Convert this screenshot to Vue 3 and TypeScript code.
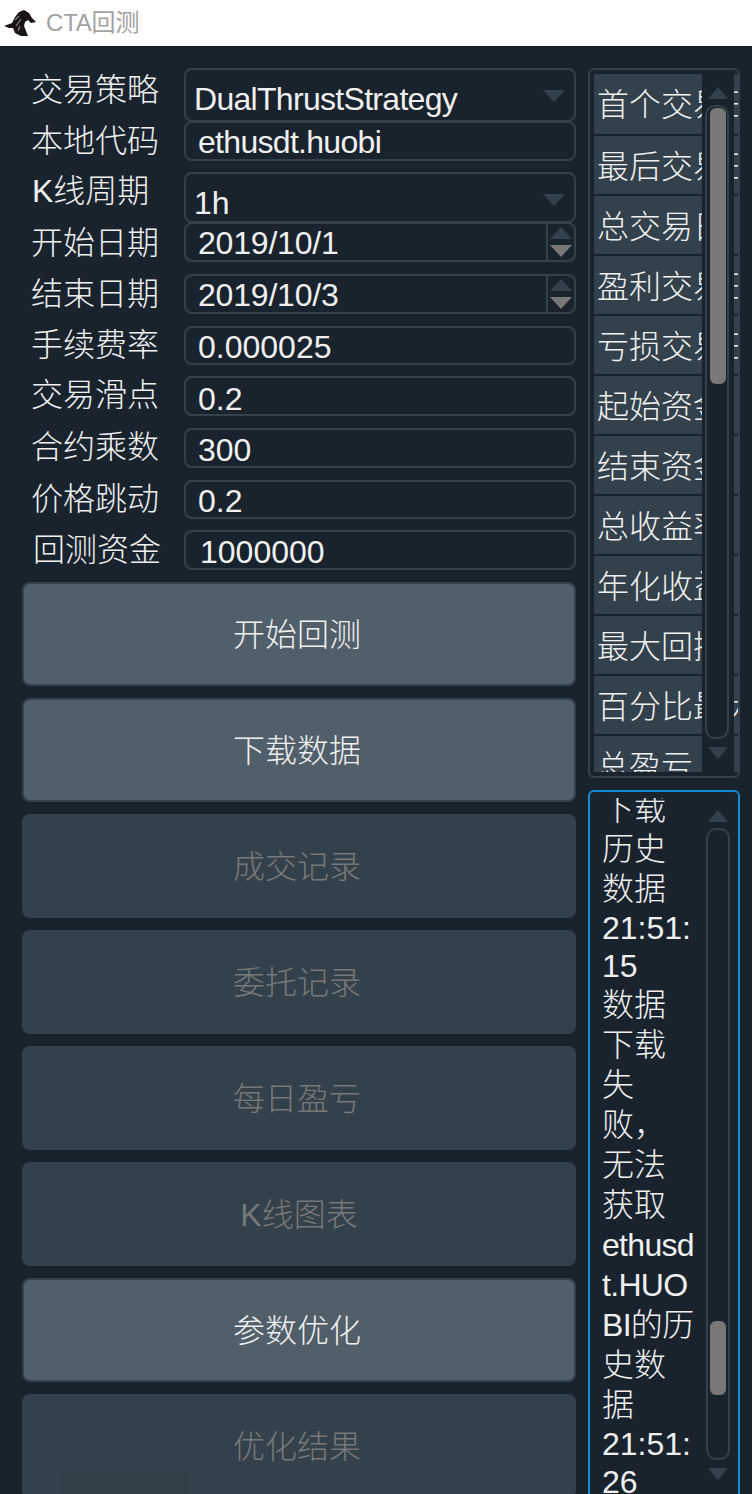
<script setup lang="ts">
interface Field {
  label: string
  value: string
  kind: 'select' | 'input' | 'spin'
  rowH: number
  boxH: number
  lineH: number
  spacing: number
  indent: number
  labelTop: number
  labelLeft: number
}

const fields: Field[] = [
  { label: '交易策略', value: 'DualThrustStrategy', kind: 'select', rowH: 53, boxH: 54, lineH: 58, spacing: -0.7, indent: 0, labelTop: 2, labelLeft: 9 },
  { label: '本地代码', value: 'ethusdt.huobi', kind: 'input', rowH: 51, boxH: 40, lineH: 38, spacing: -0.7, indent: 0, labelTop: 0, labelLeft: 9 },
  { label: 'K线周期', value: '1h', kind: 'select', rowH: 50, boxH: 51, lineH: 58, spacing: 0, indent: 0, labelTop: -1, labelLeft: 10 },
  { label: '开始日期', value: '2019/10/1', kind: 'spin', rowH: 52, boxH: 40, lineH: 38, spacing: -0.2, indent: 0, labelTop: 1, labelLeft: 9 },
  { label: '结束日期', value: '2019/10/3', kind: 'spin', rowH: 52, boxH: 40, lineH: 38, spacing: -0.2, indent: 0, labelTop: 0, labelLeft: 9 },
  { label: '手续费率', value: '0.000025', kind: 'input', rowH: 50, boxH: 39, lineH: 38, spacing: 0, indent: 0, labelTop: -1, labelLeft: 9 },
  { label: '交易滑点', value: '0.2', kind: 'input', rowH: 52, boxH: 40, lineH: 42, spacing: 0, indent: 0, labelTop: -1, labelLeft: 9 },
  { label: '合约乘数', value: '300', kind: 'input', rowH: 52, boxH: 40, lineH: 40, spacing: 0, indent: 0, labelTop: -1, labelLeft: 9 },
  { label: '价格跳动', value: '0.2', kind: 'input', rowH: 50, boxH: 39, lineH: 38, spacing: 0, indent: 0, labelTop: -1, labelLeft: 9 },
  { label: '回测资金', value: '1000000', kind: 'input', rowH: 52, boxH: 40, lineH: 40, spacing: 0, indent: 2, labelTop: 0, labelLeft: 11 },
]

const buttons = [
  { text: '开始回测', enabled: true },
  { text: '下载数据', enabled: true },
  { text: '成交记录', enabled: false },
  { text: '委托记录', enabled: false },
  { text: '每日盈亏', enabled: false },
  { text: 'K线图表', enabled: false },
  { text: '参数优化', enabled: true },
  { text: '优化结果', enabled: false },
]

const stats = [
  '首个交易日', '最后交易日', '总交易日', '盈利交易日', '亏损交易日', '起始资金',
  '结束资金', '总收益率', '年化收益', '最大回撤', '百分比最大回撤', '总盈亏',
]

const logLines: { text: string; short?: boolean; tight?: boolean }[] = [
  { text: '下载' }, { text: '历史' }, { text: '数据' },
  { text: '21:51:', short: true }, { text: '15', short: true },
  { text: '数据' }, { text: '下载' }, { text: '失' }, { text: '败，' },
  { text: '无法' }, { text: '获取' }, { text: 'ethusd', tight: true }, { text: 't.HUO', tight: true },
  { text: 'BI的历', tight: true }, { text: '史数' }, { text: '据' },
  { text: '21:51:', short: true }, { text: '26', short: true },
]
</script>

<template>
  <div class="window">
    <header class="titlebar">
      <svg class="logo" viewBox="0 0 32 28" width="32" height="28" aria-hidden="true">
        <path
          d="M0 17 L8 14 L11 8 L15 3 L20 1 L25 4 L28 9 L32 13 L27 14 L24 11 L21 13 L20 17 L22 22 L24 27 L17 27 L11 24 L9 19 L5 19 Z"
          fill="#1b1414"
        />
        <path d="M11 11 L15 7 M12 17 L17 10 M14 22 L16 17" stroke="#8a8484" stroke-width="1.2" fill="none" />
      </svg>
      <span class="title">CTA回测</span>
    </header>

    <main class="content">
      <section class="left">
        <div class="form">
          <div v-for="f in fields" :key="f.label" class="row" :style="{ height: f.rowH + 'px' }">
            <label class="label" :style="{ marginTop: f.labelTop + 'px', paddingLeft: f.labelLeft + 'px' }">{{ f.label }}</label>
            <div class="box" :class="'box-' + f.kind" :style="{ height: f.boxH + 'px', lineHeight: f.lineH + 'px' }">
              <span class="value" :style="{ letterSpacing: f.spacing + 'px', marginLeft: f.indent + 'px' }">{{ f.value }}</span>
              <i v-if="f.kind === 'select'" class="tri tri-down tri-dim select-arrow"></i>
              <div v-if="f.kind === 'spin'" class="spin">
                <div class="spin-cell"><i class="tri tri-up tri-dim"></i></div>
                <div class="spin-cell"><i class="tri tri-down tri-grey"></i></div>
              </div>
            </div>
          </div>
        </div>
        <div class="buttons">
          <button
            v-for="b in buttons"
            :key="b.text"
            class="btn"
            :class="{ disabled: !b.enabled, latin: b.text.startsWith('K') }"
            type="button"
          >{{ b.text }}</button>
        </div>
      </section>

      <aside class="right">
        <div class="table">
          <div class="rows">
            <div v-for="s in stats" :key="s" class="stat-row"><span class="stat-text">{{ s }}</span></div>
          </div>
          <div class="vbar vbar-table">
            <i class="tri tri-up tri-dim bar-up"></i>
            <div class="track track-table"><div class="thumb thumb-table"></div></div>
            <i class="tri tri-down tri-dim bar-down"></i>
          </div>
        </div>

        <div class="log">
          <div class="log-view">
            <div class="log-text">
              <div
                v-for="(l, i) in logLines"
                :key="i"
                class="log-line"
                :class="{ short: l.short, tight: l.tight }"
              >{{ l.text }}</div>
            </div>
          </div>
          <div class="vbar vbar-log">
            <i class="tri tri-up tri-dim bar-up"></i>
            <div class="track track-log"><div class="thumb thumb-log"></div></div>
            <i class="tri tri-down tri-dim bar-down"></i>
          </div>
        </div>
      </aside>
    </main>
  </div>
</template>

<style scoped>
.window {
  width: 752px;
  height: 1494px;
  overflow: hidden;
  background: #19232d;
  color: #f0f0f0;
  font-family: "Liberation Sans", "Noto Sans CJK SC", sans-serif;
  font-size: 32px;
}
.titlebar {
  height: 46px;
  background: #ffffff;
  display: flex;
  align-items: center;
  padding-left: 4px;
  box-sizing: border-box;
}
.logo {
  flex: none;
}
.title {
  margin-left: 10px;
  font-size: 24px;
  letter-spacing: -0.2px;
  color: #a2a2a2;
  line-height: 46px;
}
.content {
  display: flex;
  gap: 12px;
  padding: 22px 0 0 22px;
  align-items: flex-start;
}
.left {
  width: 554px;
  flex: none;
}
.form {
  display: flex;
  flex-direction: column;
}
.row {
  display: flex;
  align-items: flex-start;
}
.label {
  width: 162px;
  flex: none;
  box-sizing: border-box;
  line-height: 40px;
  white-space: nowrap;
  font-weight: 300;
}
.box {
  position: relative;
  flex: 1;
  box-sizing: border-box;
  border: 2px solid #32414b;
  border-radius: 8px;
  padding-left: 12px;
  white-space: nowrap;
}
.box-select {
  padding-left: 8px;
}
.select-arrow {
  position: absolute;
  right: 9px;
  top: 20px;
}
.tri {
  display: block;
  width: 0;
  height: 0;
  border-left: 11px solid transparent;
  border-right: 11px solid transparent;
}
.tri-down.tri-dim { border-top: 12px solid #32414b; }
.tri-up.tri-dim { border-bottom: 12px solid #32414b; }
.tri-down.tri-grey { border-top: 12px solid #787878; }
.spin {
  position: absolute;
  right: 0;
  top: 0;
  bottom: 0;
  width: 28px;
  display: flex;
  flex-direction: column;
  justify-content: space-between;
}
.spin-cell {
  height: 18px;
  border-left: 2px solid #32414b;
  display: flex;
  align-items: center;
  justify-content: center;
}
.buttons {
  display: flex;
  flex-direction: column;
  gap: 12px;
}
.btn {
  position: relative;
  height: 104px;
  flex: none;
  box-sizing: border-box;
  border: 2px solid #32414b;
  border-radius: 8px;
  background: #505f69;
  color: #f0f0f0;
  font: inherit;
  font-weight: 300;
  padding: 0 4px 4px 0;
}
.btn.latin {
  padding-right: 0;
}
.btn.disabled {
  background: #32414b;
  color: #787878;
}
.btn:last-child::after {
  content: "";
  position: absolute;
  left: 38px;
  top: 77px;
  width: 128px;
  height: 30px;
  background: #304049;
}
.right {
  width: 152px;
  flex: none;
  display: flex;
  flex-direction: column;
  gap: 12px;
}
.table {
  position: relative;
  height: 710px;
  box-sizing: border-box;
  border: 2px solid #32414b;
  border-radius: 6px;
  padding: 4px 0 4px 4px;
}
.rows {
  height: 698px;
  overflow: hidden;
  display: flex;
  flex-direction: column;
  gap: 2px;
}
.stat-row {
  height: 58px;
  flex: none;
  background: #32414b;
  padding-left: 3px;
  line-height: 62px;
  white-space: nowrap;
  overflow: hidden;
  font-weight: 300;
}
.stat-row:first-child {
  height: 60px;
}
.vbar {
  position: absolute;
  background: #19232d;
  width: 32px;
}
.vbar-table {
  left: 112px;
  top: 4px;
  bottom: 4px;
}
.bar-up {
  position: absolute;
  left: 6px;
  top: 13px;
  border-left-width: 10px;
  border-right-width: 10px;
}
.bar-down {
  position: absolute;
  left: 6px;
  bottom: 13px;
  border-left-width: 10px;
  border-right-width: 10px;
}
.track {
  position: absolute;
  left: 3px;
  width: 24px;
  box-sizing: border-box;
  border: 2px solid #32414b;
  border-radius: 10px;
}
.track-table {
  top: 31px;
  height: 634px;
}
.thumb {
  position: absolute;
  left: 2px;
  width: 16px;
  background: #787878;
  border-radius: 6px;
}
.thumb-table {
  left: 3px;
  top: 1px;
  height: 276px;
}
.log {
  position: relative;
  height: 760px;
  box-sizing: border-box;
  border: 2px solid #148cd2;
  border-radius: 6px;
}
.log-view {
  margin-top: 6px;
  height: 740px;
  overflow: hidden;
}
.log-text {
  margin-top: -9px;
  padding-left: 12px;
}
.log-line {
  height: 40px;
  line-height: 40px;
  white-space: nowrap;
  font-weight: 300;
}
.log-line.short {
  height: 38px;
  line-height: 38px;
}
.log-line.tight {
  letter-spacing: -0.7px;
}
.vbar-log {
  left: 114px;
  top: 0;
  bottom: 0;
  width: 30px;
  background: transparent;
}
.track-log {
  top: 36px;
  height: 632px;
  left: 2px;
}
.thumb-log {
  top: 491px;
  height: 74px;
}
.vbar-log .bar-up {
  left: 4px;
  top: 18px;
}
.vbar-log .bar-down {
  left: 4px;
  top: 676px;
  bottom: auto;
}
</style>

<style>
html, body {
  margin: 0;
  background: #19232d;
}
</style>
